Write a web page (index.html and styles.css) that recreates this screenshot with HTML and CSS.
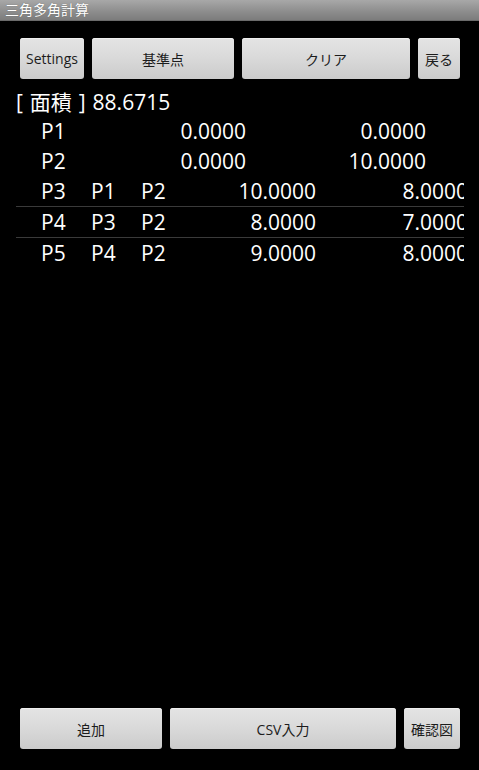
FILE: index.html
```html
<!DOCTYPE html>
<html lang="ja">
<head>
<meta charset="utf-8">
<title>三角多角計算</title>
<link rel="stylesheet" href="styles.css">
</head>
<body>
<div class="screen">
  <div class="titlebar">三角多角計算</div>
  <div class="toolbar">
    <button class="btn w-settings">Settings</button>
    <button class="btn w-base">基準点</button>
    <button class="btn w-clear">クリア</button>
    <button class="btn w-back">戻る</button>
  </div>
  <div class="area">[ 面積 ] 88.6715</div>
  <div class="table">
    <div class="row base first">
      <span class="c">P1</span>
      <span class="num">0.0000</span>
      <span class="num">0.0000</span>
    </div>
    <div class="row base">
      <span class="c">P2</span>
      <span class="num">0.0000</span>
      <span class="num">10.0000</span>
    </div>
    <div class="row tri sep">
      <span class="c">P3</span>
      <span class="c">P1</span>
      <span class="c">P2</span>
      <span class="num">10.0000</span>
      <span class="num">8.0000</span>
    </div>
    <div class="row tri sep">
      <span class="c">P4</span>
      <span class="c">P3</span>
      <span class="c">P2</span>
      <span class="num">8.0000</span>
      <span class="num">7.0000</span>
    </div>
    <div class="row tri">
      <span class="c">P5</span>
      <span class="c">P4</span>
      <span class="c">P2</span>
      <span class="num">9.0000</span>
      <span class="num">8.0000</span>
    </div>
  </div>
  <div class="spacer"></div>
  <div class="bottombar">
    <button class="btn w-add">追加</button>
    <button class="btn w-csv">CSV入力</button>
    <button class="btn w-fig">確認図</button>
  </div>
</div>
</body>
</html>
```

FILE: styles.css
```css
html, body {
  margin: 0;
  padding: 0;
  background: #000;
}

.screen {
  width: 479px;
  height: 770px;
  display: flex;
  flex-direction: column;
  background: #000;
  color: #fff;
  font-family: "Open Sans", "Noto Sans CJK JP", sans-serif;
  overflow: hidden;
}

.titlebar {
  height: 21px;
  box-sizing: border-box;
  padding-left: 5px;
  font-size: 14px;
  line-height: 20px;
  color: #fff;
  background: linear-gradient(#a8a8a8, #8c8c8c 60%, #7c7c7c);
  border-bottom: 1px solid #6a6a6a;
  text-shadow: 0 0 1px rgba(0,0,0,0.4);
}

.toolbar {
  display: flex;
  gap: 8px;
  padding-left: 20px;
  margin-top: 17px;
}

.bottombar {
  display: flex;
  gap: 8px;
  padding-left: 20px;
  margin-bottom: 21px;
}

.btn {
  height: 41px;
  margin: 0;
  padding: 0;
  border: none;
  border-radius: 3px;
  background: linear-gradient(#e4e4e4, #d9d9d9 50%, #cbcbcb);
  color: #1c1c1c;
  font-family: "Open Sans", "Noto Sans CJK JP", sans-serif;
  font-size: 14px;
  box-shadow: inset 0 1px 0 #efefef;
}

.w-settings { width: 64px; }
.w-base { width: 142px; }
.w-clear { width: 168px; }
.w-back { width: 42px; }
.w-add { width: 142px; }
.w-csv { width: 226px; }
.w-fig { width: 56px; }

.area {
  margin-top: 9px;
  padding-left: 16px;
  font-size: 21px;
  line-height: 29px;
  height: 29px;
  word-spacing: 1.5px;
}

.table {
  margin-left: 16px;
  width: 448px;
  overflow: hidden;
  font-size: 21px;
}

.row {
  display: grid;
  height: 30px;
  line-height: 30px;
  padding-left: 25px;
  white-space: nowrap;
}

.row.first {
  height: 29px;
  line-height: 29px;
}

.row.base {
  grid-template-columns: 50px 155px 180px;
}

.row.tri {
  grid-template-columns: 50px 50px 50px 125px 152px;
}

.row.sep {
  border-bottom: 1px solid #3a3a3a;
}

.num {
  text-align: right;
}

.spacer {
  flex: 1;
}
```
